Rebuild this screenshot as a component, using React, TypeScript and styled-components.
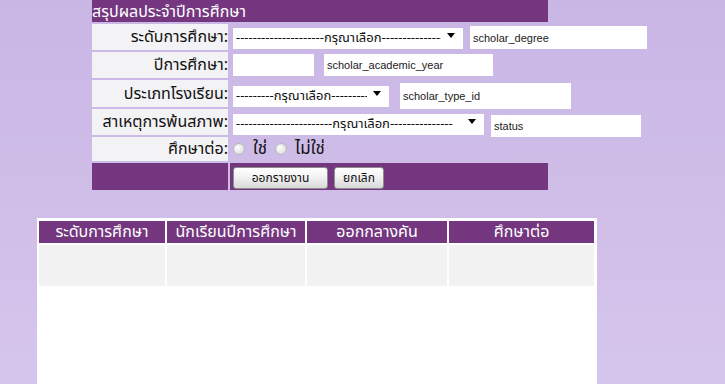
import React from 'react';
import styled, { createGlobalStyle } from 'styled-components';

const thai = `Tahoma, "Noto Sans Thai", "Noto Sans Thai UI", Loma, Garuda, "DejaVu Sans", sans-serif`;

const GlobalStyle = createGlobalStyle`
  html, body {
    margin: 0;
    padding: 0;
  }
  body {
    background: linear-gradient(180deg, #c9b6e5 0%, #d6c5ec 100%);
    min-height: 384px;
    font-family: ${thai};
    overflow: hidden;
  }
`;

const Page = styled.div`
  display: flex;
  flex-direction: column;
  height: 384px;
  overflow: hidden;
`;

const FormGrid = styled.div`
  display: grid;
  grid-template-columns: 136px 318px;
  column-gap: 2px;
  row-gap: 2px;
  width: 456px;
  margin-left: 92px;
`;

const FormTitle = styled.div`
  grid-column: 1 / span 2;
  height: 22px;
  background: #74367f;
  color: #fff;
  font-size: 16px;
  line-height: 24px;
  white-space: nowrap;
`;

const Label = styled.div<{ $h: number; $dark?: boolean }>`
  height: ${(p) => p.$h}px;
  background: ${(p) => (p.$dark ? '#74367f' : '#f3f2f4')};
  color: #111;
  font-size: 16px;
  display: flex;
  align-items: center;
  justify-content: flex-end;
  white-space: nowrap;
`;

const Value = styled.div<{ $h: number; $dark?: boolean; $center?: boolean }>`
  height: ${(p) => p.$h}px;
  background: ${(p) => (p.$dark ? '#74367f' : 'transparent')};
  display: flex;
  align-items: ${(p) => (p.$center ? 'center' : 'flex-start')};
  gap: 6px;
  padding-left: 3px;
  white-space: nowrap;
  overflow: visible;
  & > * {
    flex-shrink: 0;
  }
`;

const SelectWrap = styled.div<{ $w: number; $mt?: number }>`
  position: relative;
  width: ${(p) => p.$w}px;
  height: 21px;
  margin-top: ${(p) => p.$mt ?? 0}px;
  &::after {
    content: '';
    position: absolute;
    right: 8px;
    top: 8px;
    border-left: 4px solid transparent;
    border-right: 4px solid transparent;
    border-top: 5px solid #000;
    pointer-events: none;
  }
`;

const Select = styled.select`
  appearance: none;
  width: 100%;
  height: 100%;
  border: none;
  background: #fff;
  font-family: ${thai};
  font-size: 13px;
  color: #111;
  padding: 0 22px 0 3px;
  outline: none;
`;

const TextInput = styled.input<{ $w: number; $h?: number; $ml?: number; $mt?: number }>`
  width: ${(p) => p.$w}px;
  height: ${(p) => p.$h ?? 23}px;
  box-sizing: border-box;
  border: none;
  background: #fff;
  font-family: "Liberation Sans", Arial, sans-serif;
  font-size: 11px;
  color: #222;
  padding: 0 3px;
  margin-left: ${(p) => p.$ml ?? 0}px;
  margin-top: ${(p) => p.$mt ?? 0}px;
  outline: none;
`;

const RadioRow = styled.label`
  display: flex;
  align-items: center;
  gap: 8px;
  font-size: 17px;
  color: #111;
  margin-right: 2px;
`;

const Radio = styled.input`
  appearance: none;
  width: 12px;
  height: 12px;
  margin: 0;
  border-radius: 50%;
  border: 1px solid #b9b9b9;
  background: radial-gradient(circle at 40% 40%, #ffffff 0%, #e4e4e4 60%, #cfcfcf 100%);
`;

const Button = styled.button<{ $w: number }>`
  width: ${(p) => p.$w}px;
  height: 22px;
  margin-top: 4px;
  border: 1px solid #8e8e8e;
  border-radius: 3px;
  background: linear-gradient(180deg, #ffffff 0%, #f0f0f0 50%, #d9d9d9 100%);
  font-family: ${thai};
  font-size: 12px;
  color: #111;
  padding: 0;
`;

const Results = styled.div`
  margin: 28px 0 0 37px;
  width: 560px;
  height: 180px;
  background: #fff;
  padding: 3px 3px 0 2px;
  box-sizing: border-box;
`;

const ResultGrid = styled.div`
  display: grid;
  grid-template-columns: 126px 138px 140px 145px;
  column-gap: 2px;
  row-gap: 2px;
`;

const HeadCell = styled.div`
  height: 22px;
  background: #74367f;
  color: #fff;
  font-size: 16px;
  line-height: 22px;
  text-align: center;
  white-space: nowrap;
`;

const BodyCell = styled.div`
  height: 41px;
  background: #f2f2f2;
`;

export default function App() {
  return (
    <Page>
      <GlobalStyle />
      <FormGrid>
        <FormTitle>สรุปผลประจำปีการศึกษา</FormTitle>

        <Label $h={26}>ระดับการศึกษา:</Label>
        <Value $h={26}>
          <SelectWrap $w={230} $mt={1}>
            <Select defaultValue="">
              <option value="">---------------------กรุณาเลือก---------------</option>
            </Select>
          </SelectWrap>
          <TextInput $w={177} $ml={1} $mt={2} defaultValue="scholar_degree" />
        </Value>

        <Label $h={26}>ปีการศึกษา:</Label>
        <Value $h={26}>
          <TextInput $w={81} $h={22} $mt={2} />
          <TextInput $w={169} $h={22} $ml={4} $mt={2} defaultValue="scholar_academic_year" />
        </Value>

        <Label $h={27}>ประเภทโรงเรียน:</Label>
        <Value $h={27}>
          <SelectWrap $w={156} $mt={3}>
            <Select defaultValue="">
              <option value="">---------กรุณาเลือก---------</option>
            </Select>
          </SelectWrap>
          <TextInput $w={171} $h={26} $ml={5} $mt={3} defaultValue="scholar_type_id" />
        </Value>

        <Label $h={26}>สาเหตุการพ้นสภาพ:</Label>
        <Value $h={26}>
          <SelectWrap $w={251} $mt={2}>
            <Select defaultValue="">
              <option value="">-----------------------กรุณาเลือก---------------</option>
            </Select>
          </SelectWrap>
          <TextInput $w={150} $h={22} $ml={1} $mt={6} defaultValue="status" />
        </Value>

        <Label $h={24}>ศึกษาต่อ:</Label>
        <Value $h={24} $center>
          <RadioRow>
            <Radio type="radio" name="cont" />
            ใช่
          </RadioRow>
          <RadioRow>
            <Radio type="radio" name="cont" />
            ไม่ใช่
          </RadioRow>
        </Value>

        <Label $h={27} $dark />
        <Value $h={27} $dark>
          <Button $w={95}>ออกรายงาน</Button>
          <Button $w={50}>ยกเลิก</Button>
        </Value>
      </FormGrid>

      <Results>
        <ResultGrid>
          <HeadCell>ระดับการศึกษา</HeadCell>
          <HeadCell>นักเรียนปีการศึกษา</HeadCell>
          <HeadCell>ออกกลางคัน</HeadCell>
          <HeadCell>ศึกษาต่อ</HeadCell>
          <BodyCell />
          <BodyCell />
          <BodyCell />
          <BodyCell />
        </ResultGrid>
      </Results>
    </Page>
  );
}
